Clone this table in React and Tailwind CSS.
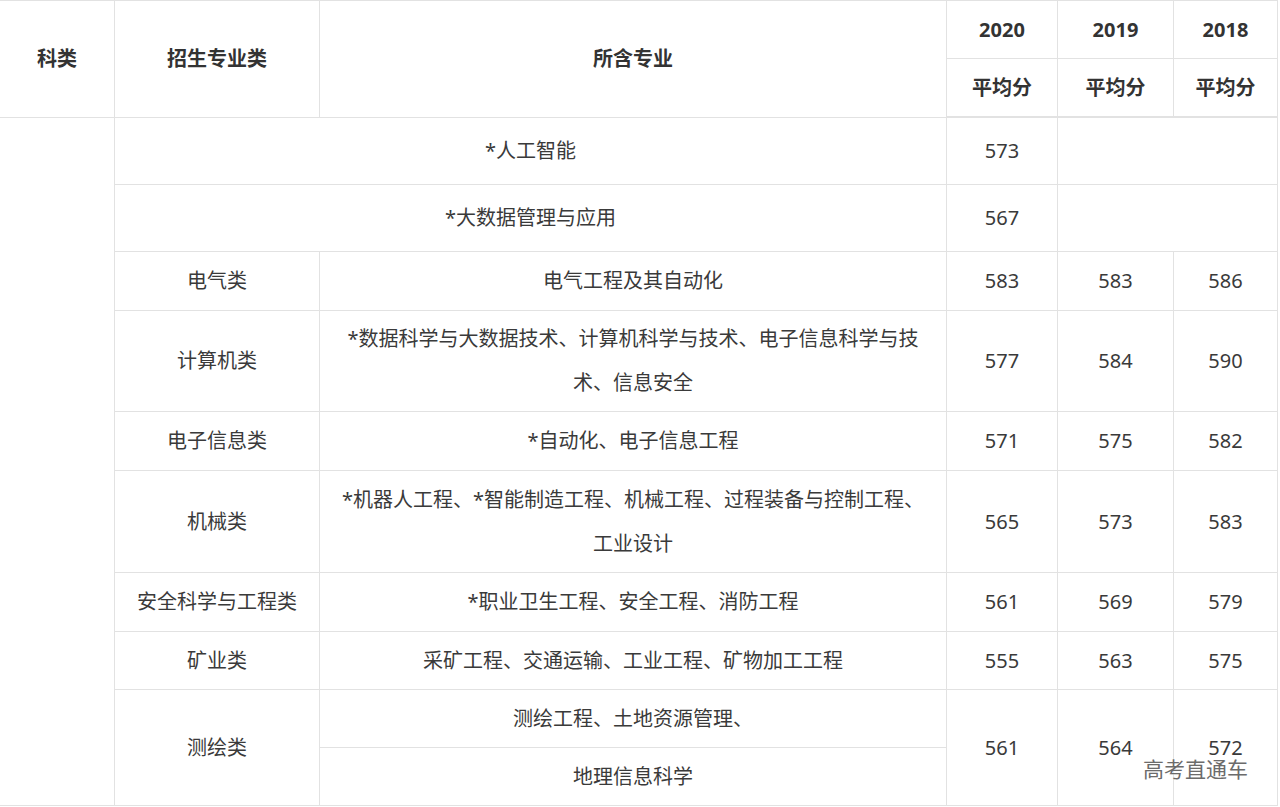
import React from "react";

const rows = [
  { major: "*人工智能", merged: true, s20: "573", h: "h-[67px]" },
  { major: "*大数据管理与应用", merged: true, s20: "567", h: "h-[67px]" },
  { cat: "电气类", major: "电气工程及其自动化", s20: "583", s19: "583", s18: "586", h: "h-[59px]" },
  {
    cat: "计算机类",
    major: "*数据科学与大数据技术、计算机科学与技术、电子信息科学与技术、信息安全",
    s20: "577",
    s19: "584",
    s18: "590",
    h: "h-[101px]",
  },
  { cat: "电子信息类", major: "*自动化、电子信息工程", s20: "571", s19: "575", s18: "582", h: "h-[59px]" },
  {
    cat: "机械类",
    major: "*机器人工程、*智能制造工程、机械工程、过程装备与控制工程、工业设计",
    s20: "565",
    s19: "573",
    s18: "583",
    h: "h-[102px]",
  },
  { cat: "安全科学与工程类", major: "*职业卫生工程、安全工程、消防工程", s20: "561", s19: "569", s18: "579", h: "h-[59px]" },
  { cat: "矿业类", major: "采矿工程、交通运输、工业工程、矿物加工工程", s20: "555", s19: "563", s18: "575", h: "h-[58px]" },
];

const cell = "border-r border-b border-[#e2e2e2] text-center align-middle p-0";
const th = cell + " font-bold text-[20px] text-[#333]";

export default function App() {
  return (
    <div
      className="relative w-[1280px] h-[807px] overflow-hidden bg-white text-[#3a3a3a] text-[20px] leading-[44px]"
      style={{ fontFamily: '"Noto Sans", "Noto Sans CJK SC", sans-serif' }}
    >
      <table className="w-[1278px] table-fixed border-separate border-spacing-0 border-t border-[#e2e2e2]">
        <colgroup>
          <col className="w-[115px]" />
          <col className="w-[205px]" />
          <col className="w-[627px]" />
          <col className="w-[111px]" />
          <col className="w-[116px]" />
          <col className="w-[104px]" />
        </colgroup>
        <thead>
          <tr className="h-[58px]">
            <th rowSpan={2} className={th}>科类</th>
            <th rowSpan={2} className={th}>招生专业类</th>
            <th rowSpan={2} className={th}>所含专业</th>
            <th className={th}>2020</th>
            <th className={th}>2019</th>
            <th className={th}>2018</th>
          </tr>
          <tr className="h-[59px]">
            <th className={th + " border-b-2"}>平均分</th>
            <th className={th + " border-b-2"}>平均分</th>
            <th className={th + " border-b-2"}>平均分</th>
          </tr>
        </thead>
        <tbody>
          {rows.map((r, i) => (
            <tr key={i} className={r.h}>
              {i === 0 && <td rowSpan={10} className={cell}></td>}
              {r.merged ? (
                <td colSpan={2} className={cell}>{r.major}</td>
              ) : (
                <>
                  <td className={cell}>{r.cat}</td>
                  <td className={cell + " px-[18px]"}>{r.major}</td>
                </>
              )}
              <td className={cell}>{r.s20}</td>
              {r.merged ? (
                <td colSpan={2} className={cell}></td>
              ) : (
                <>
                  <td className={cell}>{r.s19}</td>
                  <td className={cell}>{r.s18}</td>
                </>
              )}
            </tr>
          ))}
          <tr className="h-[58px]">
            <td rowSpan={2} className={cell}>测绘类</td>
            <td className={cell}>测绘工程、土地资源管理、</td>
            <td rowSpan={2} className={cell}>561</td>
            <td rowSpan={2} className={cell}>564</td>
            <td rowSpan={2} className={cell}>572</td>
          </tr>
          <tr className="h-[58px]">
            <td className={cell}>地理信息科学</td>
          </tr>
        </tbody>
      </table>
      <div className="absolute left-[1143px] top-[752px] text-[21px] leading-[34px] text-[#6b6b6b] [text-shadow:0_0_2px_#fff]">
        高考直通车
      </div>
    </div>
  );
}
